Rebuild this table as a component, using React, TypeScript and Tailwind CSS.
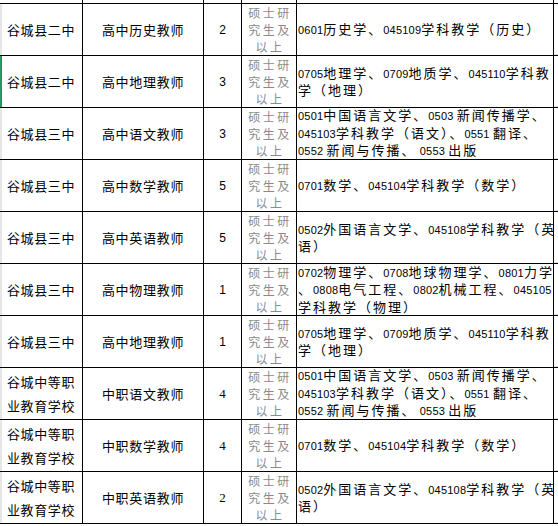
import React from "react";

type Row = {
  school: string[];
  post: string;
  num: string;
  serifNum?: boolean;
  major: string[];
  green?: boolean;
};

const rows: Row[] = [
  { school: ["谷城县二中"], post: "高中历史教师", num: "2", major: ["0601历史学、045109学科教学（历史）"] },
  { school: ["谷城县二中"], post: "高中地理教师", num: "3", major: ["0705地理学、0709地质学、045110学科教", "学（地理）"], green: true },
  { school: ["谷城县三中"], post: "高中语文教师", num: "3", major: ["0501中国语言文学、0503 新闻传播学、", "045103学科教学（语文）、0551 翻译、", "0552 新闻与传播、 0553 出版"] },
  { school: ["谷城县三中"], post: "高中数学教师", num: "5", major: ["0701数学、045104学科教学（数学）"] },
  { school: ["谷城县三中"], post: "高中英语教师", num: "5", major: ["0502外国语言文学、045108学科教学（英", "语）"] },
  { school: ["谷城县三中"], post: "高中物理教师", num: "1", major: ["0702物理学、0708地球物理学、0801力学", "、0808电气工程、0802机械工程、045105", "学科教学（物理）"] },
  { school: ["谷城县三中"], post: "高中地理教师", num: "1", major: ["0705地理学、0709地质学、045110学科教", "学（地理）"] },
  { school: ["谷城中等职", "业教育学校"], post: "中职语文教师", num: "4", serifNum: true, major: ["0501中国语言文学、0503 新闻传播学、", "045103学科教学（语文）、0551 翻译、", "0552 新闻与传播、 0553 出版"] },
  { school: ["谷城中等职", "业教育学校"], post: "中职数学教师", num: "4", serifNum: true, major: ["0701数学、045104学科教学（数学）"] },
  { school: ["谷城中等职", "业教育学校"], post: "中职英语教师", num: "2", serifNum: true, major: ["0502外国语言文学、045108学科教学（英", "语）"] },
];

function Mixed({ text }: { text: string }) {
  const parts = text.match(/[\x00-\x7f]+|[^\x00-\x7f]+/g) ?? [];
  return (
    <>
      {parts.map((p, i) =>
        /^[\x00-\x7f]/.test(p) ? (
          <span key={i} className="font-['Liberation_Sans',sans-serif] text-[11px] tracking-[0.2px]">
            {p}
          </span>
        ) : (
          <span key={i}>{p}</span>
        )
      )}
    </>
  );
}

export default function App() {
  return (
    <div className="w-[558px] h-[526px] overflow-hidden bg-white text-black font-['Noto_Sans_CJK_SC',sans-serif]">
      <div className="flex h-[4px] border-b border-black">
        <div className="w-[2px] shrink-0" />
        <div className="w-[81px] shrink-0 border-r border-black" />
        <div className="w-[121px] shrink-0 border-r border-black" />
        <div className="w-[38px] shrink-0 border-r border-black" />
        <div className="w-[55px] shrink-0 border-r border-black" />
        <div className="w-[257px] shrink-0 border-r border-black" />
        <div className="flex-1" />
      </div>
      {rows.map((r, i) => (
        <div key={i} className="flex h-[52px] border-b border-black">
          <div className={`w-[2px] shrink-0 ${r.green ? "bg-[#1f9a64]" : "bg-[#e6e6e6]"}`} />
          <div className="w-[81px] shrink-0 border-r border-black flex flex-col justify-center pl-[5px] text-[13px] leading-[24px] tracking-[0.6px]">
            {r.school.map((s, j) => (
              <div key={j} className="whitespace-nowrap">{s}</div>
            ))}
          </div>
          <div className="w-[121px] shrink-0 border-r border-black flex items-center justify-center text-[13px] tracking-[0.7px]">
            {r.post}
          </div>
          <div
            className={`w-[38px] shrink-0 border-r border-black flex items-center justify-center ${
              r.serifNum ? "font-['Liberation_Serif',serif] text-[13px]" : "font-['Liberation_Sans',sans-serif] text-[12px]"
            }`}
          >
            {r.num}
          </div>
          <div className="w-[55px] shrink-0 border-r border-black flex flex-col items-center justify-center text-[12px] leading-[17px] tracking-[2.5px] text-[#8a8a8a] pl-[2px]">
            <div>硕士研</div>
            <div>究生及</div>
            <div>以上</div>
          </div>
          <div className="w-[257px] shrink-0 border-r border-black flex flex-col justify-center pl-[1px] text-[13px] leading-[16.5px] tracking-[2px]">
            {r.major.map((m, j) => (
              <div key={j} className="whitespace-nowrap">
                <Mixed text={m} />
              </div>
            ))}
          </div>
          <div className="flex-1 border-b border-[#e2e2e2]" />
        </div>
      ))}
    </div>
  );
}
